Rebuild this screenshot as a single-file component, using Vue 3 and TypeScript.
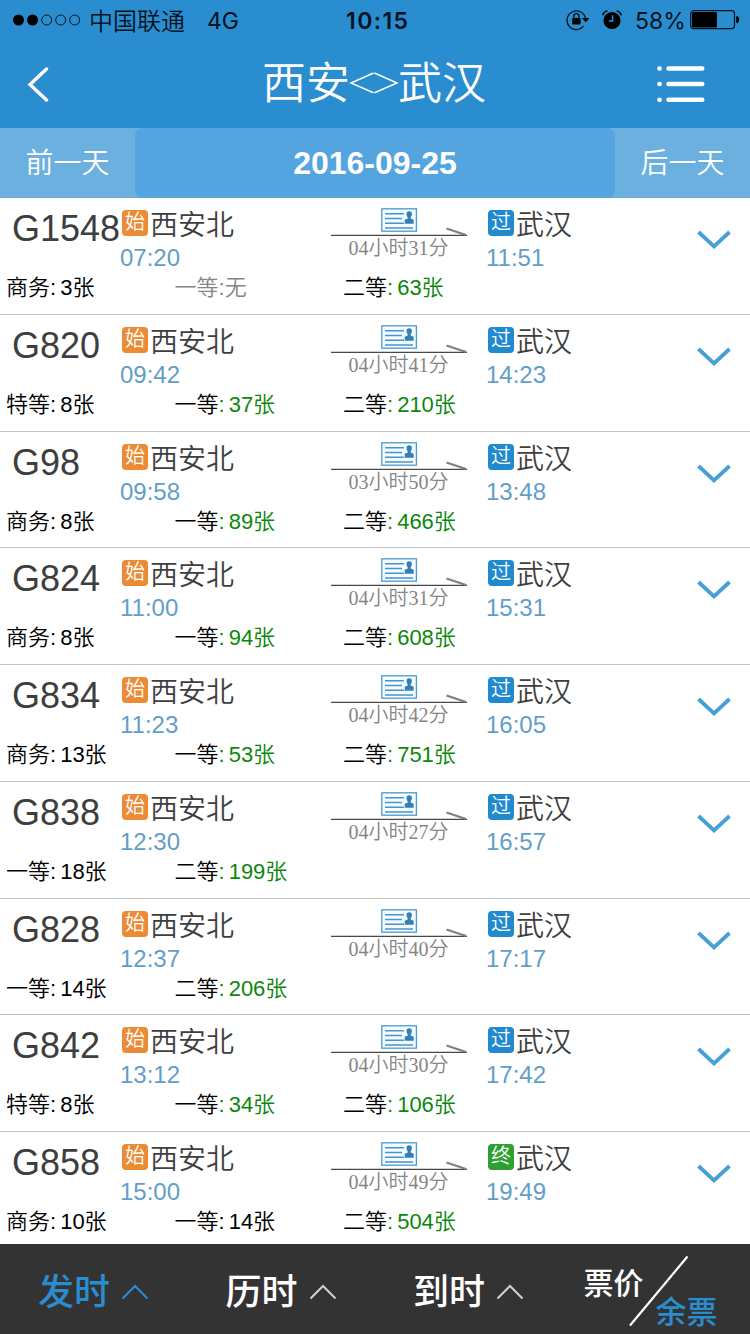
<script setup lang="ts">
interface Seat {
  kind: string
  count: string
}

interface Train {
  no: string
  depart: string
  arrive: string
  duration: string
  seats: Seat[]
  terminal?: boolean
}

function seats(...pairs: [string, string][]): Seat[] {
  return pairs.map(([kind, count]) => ({ kind, count }))
}

const trains: Train[] = [
  { no: 'G1548', depart: '07:20', arrive: '11:51', duration: '04小时31分', seats: seats(['商务', '3张'], ['一等', '无'], ['二等', '63张']) },
  { no: 'G820', depart: '09:42', arrive: '14:23', duration: '04小时41分', seats: seats(['特等', '8张'], ['一等', '37张'], ['二等', '210张']) },
  { no: 'G98', depart: '09:58', arrive: '13:48', duration: '03小时50分', seats: seats(['商务', '8张'], ['一等', '89张'], ['二等', '466张']) },
  { no: 'G824', depart: '11:00', arrive: '15:31', duration: '04小时31分', seats: seats(['商务', '8张'], ['一等', '94张'], ['二等', '608张']) },
  { no: 'G834', depart: '11:23', arrive: '16:05', duration: '04小时42分', seats: seats(['商务', '13张'], ['一等', '53张'], ['二等', '751张']) },
  { no: 'G838', depart: '12:30', arrive: '16:57', duration: '04小时27分', seats: seats(['一等', '18张'], ['二等', '199张']) },
  { no: 'G828', depart: '12:37', arrive: '17:17', duration: '04小时40分', seats: seats(['一等', '14张'], ['二等', '206张']) },
  { no: 'G842', depart: '13:12', arrive: '17:42', duration: '04小时30分', seats: seats(['特等', '8张'], ['一等', '34张'], ['二等', '106张']) },
  { no: 'G858', depart: '15:00', arrive: '19:49', duration: '04小时49分', seats: seats(['商务', '10张'], ['一等', '14张'], ['二等', '504张']), terminal: true },
]

const sorts = [
  { label: '发时', active: true },
  { label: '历时', active: false },
  { label: '到时', active: false },
]

// Seats are highlighted in green once more than 20 remain.
function level(count: string): string {
  if (count === '无') return 'none'
  return parseInt(count, 10) > 20 ? 'plenty' : 'few'
}
</script>

<template>
  <div class="screen">
    <header class="top">
      <div class="status">
        <svg class="signal" width="68" height="12" viewBox="0 0 68 12">
          <circle cx="5.5" cy="6" r="5.5" />
          <circle cx="19.5" cy="6" r="5.5" />
          <g fill="none" stroke="#06121c" stroke-width="1">
            <circle cx="33.7" cy="6" r="5" />
            <circle cx="47.7" cy="6" r="5" />
            <circle cx="61.7" cy="6" r="5" />
          </g>
        </svg>
        <span class="carrier">中国联通</span>
        <span class="net">4G</span>
        <span class="clock">10:15</span>
        <svg class="lock" width="24" height="22" viewBox="0 0 24 22">
          <path d="M17.5 17.2A9.3 9.3 0 1 1 19.5 9.5" fill="none" stroke="#06121c" stroke-width="1.3" />
          <path d="M16 9h7.4l-3.7 4.3z" />
          <rect x="6.2" y="9" width="8.4" height="6.4" rx=".8" />
          <path d="M7.8 9.5V7.2a2.6 2.6 0 0 1 5.2 0v2.3" fill="none" stroke="#06121c" stroke-width="1.4" />
        </svg>
        <svg class="alarm" width="20" height="20" viewBox="0 0 20 20">
          <circle cx="10" cy="10.5" r="8.6" />
          <path d="M.7 5.2Q1.7 1.7 5.4.8M19.3 5.2Q18.3 1.7 14.6.8" fill="none" stroke="#06121c" stroke-width="1.6" />
          <path d="M10.6 5.2v5.9H6.8" fill="none" stroke="#298dd0" stroke-width="1.5" />
        </svg>
        <span class="percent">58%</span>
        <svg class="battery" width="50" height="20" viewBox="0 0 50 20">
          <rect x=".7" y=".7" width="43.8" height="18" rx="3" fill="none" stroke="#06121c" stroke-width="1.2" />
          <rect x="2" y="2" width="25" height="15.4" rx="1.5" />
          <path d="M46.2 6.3h1.3q1.7 1 1.7 3.4t-1.7 3.4h-1.3z" />
        </svg>
      </div>
      <div class="nav">
        <svg class="back" width="24" height="36" viewBox="0 0 24 36">
          <path d="M20.500 3 4 18.500 20.500 34" fill="none" stroke="#fff" stroke-width="3.400" stroke-linecap="round" />
        </svg>
        <h1 class="title">西安<svg class="swap" width="50" height="22" viewBox="0 0 50 22">
          <path d="M24.500 1 2 11l22.500 9.700M25.500 1 48 11l-22.500 9.700" fill="none" stroke="#fff" stroke-width="1.500" />
        </svg>武汉</h1>
        <svg class="menu" width="48" height="38" viewBox="0 0 48 38">
          <path d="M2.500 3.500h.1M2.500 19h.1M2.500 34.700h.1M11.500 3.500h33.700M11.500 19h33.700M11.500 34.700h33.700" stroke="#fff" stroke-width="4.600" stroke-linecap="round" />
        </svg>
      </div>
    </header>

    <div class="days">
      <span class="day">前一天</span>
      <span class="date">2016-09-25</span>
      <span class="day">后一天</span>
    </div>

    <main class="list">
      <section v-for="train in trains" :key="train.no" class="train">
        <div class="trip">
          <span class="no">{{ train.no }}</span>
          <div class="stop from">
            <div class="place"><i class="tag start">始</i><span class="station">西安北</span></div>
            <div class="time">{{ train.depart }}</div>
          </div>
          <div class="route">
            <svg width="136" height="30" viewBox="0 0 136 30">
              <rect x="50.800" y="2.800" width="34.600" height="22.400" fill="#f5fbff" stroke="#4b9ad2" stroke-width="1.300" />
              <path d="M54 7.800h19M54 12.500h17M54 17.200h19M54 22h28" stroke="#4595cf" stroke-width="1.500" />
              <path d="M78.200 5.200a2.700 2.700 0 0 1 2.700 2.800q0 2.200-1.200 3.200v1.300l3 1.300v4h-9v-4l3-1.300v-1.300q-1.200-1-1.200-3.200a2.700 2.700 0 0 1 2.700-2.800" fill="#3380b9" />
              <path d="M0 29.400h136" stroke="#484848" stroke-width="1.300" />
              <path d="M115.500 22.500 135 29" stroke="#808080" stroke-width="2.200" />
            </svg>
            <div class="duration">{{ train.duration }}</div>
          </div>
          <div class="stop to">
            <div class="place"><i class="tag" :class="train.terminal ? 'end' : 'pass'">{{ train.terminal ? '终' : '过' }}</i><span class="station">武汉</span></div>
            <div class="time">{{ train.arrive }}</div>
          </div>
          <svg class="expand" width="34" height="20" viewBox="0 0 34 20">
            <path d="M1.500 2 17 16.500 32.500 2" fill="none" stroke="#459fd8" stroke-width="3.800" />
          </svg>
        </div>
        <div class="seats">
          <div v-for="seat in train.seats" :key="seat.kind" class="seat" :class="level(seat.count)">
            <span class="kind">{{ seat.kind }}</span><span class="colon">:</span><span class="count">{{ seat.count }}</span>
          </div>
        </div>
      </section>
    </main>

    <footer class="sortbar">
      <div v-for="sort in sorts" :key="sort.label" class="sort" :class="{ active: sort.active }">
        <span>{{ sort.label }}</span>
        <svg width="28" height="16" viewBox="0 0 28 16">
          <path d="M1.500 14.500 14 2l12.500 12.500" fill="none" stroke="currentColor" stroke-width="2" />
        </svg>
      </div>
      <div class="toggle">
        <span class="price">票价</span>
        <svg width="60" height="72" viewBox="0 0 60 72">
          <path d="M1 70.500 58.500 1.500" stroke="#fff" stroke-width="2.200" />
        </svg>
        <span class="remain">余票</span>
      </div>
    </footer>
  </div>
</template>

<style>
body {
  margin: 0;
}
</style>

<style scoped>
.screen {
  display: flex;
  flex-direction: column;
  width: 750px;
  height: 1334px;
  overflow: hidden;
  background: #fff;
  font-family: "Liberation Sans", "Noto Sans CJK SC", sans-serif;
}
svg {
  display: block;
  flex: none;
}
.top {
  height: 128px;
  flex: none;
  background: #298dd0;
}
.status {
  display: flex;
  align-items: center;
  height: 40px;
  font: 24px/40px Inter, "Noto Sans CJK SC", sans-serif;
  color: #06121c;
  white-space: nowrap;
}
.signal {
  margin-left: 13px;
}
.carrier {
  width: 118px;
  margin: 3px 0 0 8px;
  font-weight: 350;
}
.net {
  width: 139px;
  margin-top: 2px;
  font-size: 23px;
}
.clock {
  width: 220px;
  margin-top: 2px;
  font-size: 23px;
  font-weight: 600;
  letter-spacing: 1.4px;
}
.alarm {
  margin-left: 12px;
}
.percent {
  width: 55px;
  margin: 2px 0 0 13px;
  font-size: 23px;
}
.nav {
  display: flex;
  align-items: center;
  justify-content: space-between;
  height: 88px;
  padding: 0 45px 0 26px;
}
.title {
  display: flex;
  align-items: center;
  margin: 0 -12px 8px 29px;
  color: #fff;
  font: 350 44px/80px "Noto Sans CJK SC", sans-serif;
}
.swap {
  margin: 6px -1px 0;
}
.days {
  display: flex;
  height: 70px;
  flex: none;
  background: #6cb0df;
  color: #fff;
  text-align: center;
}
.day {
  width: 135px;
  font: 350 28px/67px "Noto Sans CJK SC", sans-serif;
}
.date {
  flex: 1;
  border-radius: 8px;
  background: #54a5df;
  font-size: 32px;
  font-weight: 700;
  line-height: 70px;
}
.list {
  flex: 1;
  min-height: 0;
  overflow: hidden;
}
.train {
  box-sizing: border-box;
  height: 116.75px;
  border-bottom: 1px solid #c3c3c3;
}
.trip {
  display: flex;
  height: 76px;
  color: #3e3e3e;
}
.no {
  width: 109px;
  padding-left: 12px;
  font-size: 36px;
  line-height: 61px;
}
.from {
  width: 210px;
}
.to {
  width: 210px;
  margin-left: 20px;
}
.place {
  display: flex;
  align-items: center;
  box-sizing: border-box;
  height: 49px;
  padding: 1px 0 0 1px;
  font: 350 28px/46px "Noto Sans CJK SC", sans-serif;
}
.tag {
  width: 26px;
  height: 26px;
  margin-right: 2px;
  border-radius: 4px;
  color: #fff;
  font: 350 20px/22px "Noto Sans CJK SC", sans-serif;
  text-align: center;
}
.start {
  background: #ec8b36;
}
.pass {
  background: #218ace;
}
.end {
  background: #2e9f31;
}
.time {
  margin-left: -1px;
  color: #629ec7;
  font-size: 24px;
  line-height: 22px;
}
.route {
  width: 136px;
  padding-top: 8px;
}
.duration {
  margin-left: -1px;
  color: #858585;
  font: 350 20px/24px "Liberation Serif", "Noto Sans CJK SC", serif;
  text-align: center;
}
.expand {
  margin-top: 32px;
}
.seats {
  display: flex;
  padding-left: 6px;
  font-size: 22px;
  font-weight: 350;
  line-height: 28px;
}
.seat {
  width: 168.5px;
  color: #000;
  white-space: nowrap;
}
.count {
  margin-left: 4px;
}
.plenty .colon,
.plenty .count {
  color: #0b870b;
}
.none {
  color: #858585;
}
.none .count {
  margin-left: 0;
}
.sortbar {
  display: flex;
  height: 90px;
  flex: none;
  background: #333;
  color: #fff;
}
.sort {
  display: flex;
  align-items: center;
  width: 149.500px;
  padding-left: 38px;
  font: 500 36px/92px "Noto Sans CJK SC", sans-serif;
}
.sort svg {
  margin: 5px 0 0 11px;
  color: #d0d0d0;
}
.sort.active,
.sort.active svg {
  color: #298dd0;
}
.toggle {
  display: flex;
  margin-left: 21px;
  font: 500 30px/40px "Noto Sans CJK SC", sans-serif;
  white-space: nowrap;
}
.price {
  width: 45px;
  margin-top: 17px;
}
.toggle svg {
  margin-top: 11px;
}
.remain {
  margin: 46px 0 0 -33px;
  color: #298dd0;
  font-size: 31px;
}
</style>
